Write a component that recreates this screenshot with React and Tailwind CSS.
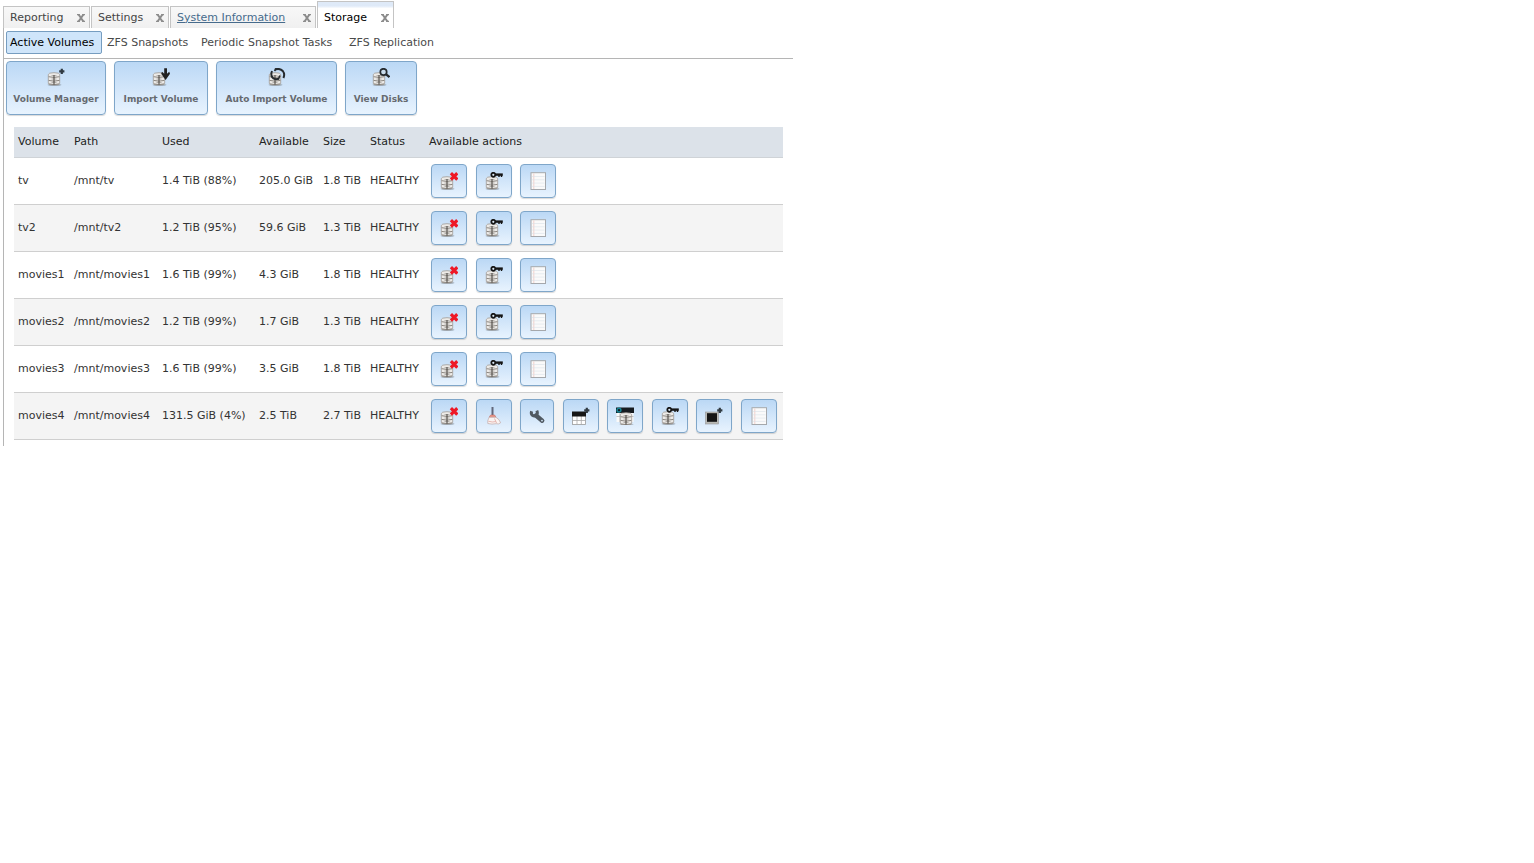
import React, { useState } from "react";

const tabs = [
  { id: "reporting", label: "Reporting", style: "w-[87px]" },
  { id: "settings", label: "Settings", style: "w-[78px]" },
  { id: "sysinfo", label: "System Information", style: "w-[146px]", link: true },
];

const subTabs = [
  { label: "Active Volumes", style: "w-[96px]" },
  { label: "ZFS Snapshots", style: "w-[89px]" },
  { label: "Periodic Snapshot Tasks", style: "w-[143px]" },
  { label: "ZFS Replication", style: "w-[92px]" },
];

const basicActions = ["detach", "key", "status"];
const fullActions = [
  "detach",
  "scrub",
  "options",
  "dataset",
  "zvol",
  "key",
  "snapshot",
  "status",
];

const volumes = [
  { name: "tv", used: "1.4 TiB (88%)", available: "205.0 GiB", size: "1.8 TiB", actions: basicActions },
  { name: "tv2", used: "1.2 TiB (95%)", available: "59.6 GiB", size: "1.3 TiB", actions: basicActions },
  { name: "movies1", used: "1.6 TiB (99%)", available: "4.3 GiB", size: "1.8 TiB", actions: basicActions },
  { name: "movies2", used: "1.2 TiB (99%)", available: "1.7 GiB", size: "1.3 TiB", actions: basicActions },
  { name: "movies3", used: "1.6 TiB (99%)", available: "3.5 GiB", size: "1.8 TiB", actions: basicActions },
  { name: "movies4", used: "131.5 GiB (4%)", available: "2.5 TiB", size: "2.7 TiB", actions: fullActions },
];

const actionLabels = {
  detach: "Detach Volume",
  scrub: "Scrub Volume",
  options: "Edit Options",
  dataset: "Create Dataset",
  zvol: "Create Zvol",
  key: "Change Permissions",
  snapshot: "Create Snapshot",
  status: "Volume Status",
};

// Stack of three drives, shared by most of the icons
function Disks() {
  return (
    <g>
      <ellipse cx="7.5" cy="16.8" rx="7" ry="1.2" fill="#7f8a94" opacity="0.6" />
      <path
        d="M1.3 6.5q0-1.8 5.7-1.8t5.7 1.8v9q0 1.5-5.7 1.5t-5.7-1.5z"
        fill="#eceae7"
        stroke="#a09b96"
        strokeWidth="0.8"
      />
      <path
        d="M1.6 8.7q5.4 1.5 10.8 0M1.6 12.4q5.4 1.5 10.8 0M1.8 15.9q5.2 1.4 10.4 0"
        fill="none"
        stroke="#8b8680"
        strokeWidth="1"
      />
      <path d="M4.5 7.6h5M4.5 11h5M4.5 14.5h5" stroke="#9d9893" strokeWidth="0.7" />
      <path d="M7 7v9.5" stroke="#57524e" strokeWidth="1.2" />
    </g>
  );
}

function Plus() {
  return <path d="M14.8 0.7v5.2M12.2 3.3h5.2" stroke="#303a42" strokeWidth="2.2" />;
}

function Grid() {
  return (
    <g>
      <rect x="0.5" y="6" width="13" height="11.5" fill="#fff" stroke="#999" strokeWidth="0.8" />
      <path d="M5 9v8.5M9.3 9v8.5M0.5 13.5h13" stroke="#aaa" strokeWidth="0.8" />
      <rect x="0" y="4.5" width="14" height="5" fill="#161616" />
    </g>
  );
}

function Icon({ name }) {
  return (
    <svg viewBox="0 0 18 18" className="inline-block h-[18px] w-[18px]" aria-hidden="true">
      {["manager", "import", "auto", "view", "detach", "key"].includes(name) && <Disks />}
      {name === "manager" && <Plus />}
      {name === "import" && (
        <path d="M12.2 0.3h2.8v5.4l2.2-2 .8 2-4.4 6.3-4.4-6.3.8-2 2.2 2z" fill="#222" />
      )}
      {name === "auto" && (
        <g fill="none" stroke="#252a2e" strokeWidth="2">
          <path d="M4 3q-1.8 4.5 1 7q2.5 2 5.3.6" />
          <path d="M6.8 1.6q5-1.8 8 1.4q2.4 3 .6 7" />
          <path d="M11.8 7.5l-1.5 4.3M8.5 0l-2 3" strokeWidth="1.6" />
        </g>
      )}
      {name === "view" && (
        <g fill="none" stroke="#252a2e">
          <circle cx="11.5" cy="4" r="3.2" fill="#c9dcec" strokeWidth="1.7" />
          <path d="M13.8 6.2l3.7 3" strokeWidth="2.3" />
        </g>
      )}
      {name === "detach" && (
        <path d="M10.9 1.2l6.4 6.4M17.3 1.2l-6.4 6.4" stroke="#ee1826" strokeWidth="3.2" />
      )}
      {name === "key" && (
        <g stroke="#151515">
          <circle cx="8.3" cy="2.8" r="2" fill="#dbe8f4" strokeWidth="1.8" />
          <path d="M10.3 2.6h7.5" strokeWidth="2.4" />
          <path d="M14 3v2M16.5 3v2" strokeWidth="1.4" />
        </g>
      )}
      {name === "status" && (
        <g>
          <rect x="2" y="0.7" width="14.5" height="16.8" fill="#fafafa" stroke="#a5a8ac" strokeWidth="1" />
          <path d="M4.8 1.5v15.5" stroke="#f0c8c0" strokeWidth="0.8" />
          <path
            d="M3 4.5h12.5M3 7.8h12.5M3 11.1h12.5M3 14.4h12.5"
            stroke="#d9e0e8"
            strokeWidth="0.6"
          />
        </g>
      )}
      {name === "scrub" && (
        <g>
          <path d="M7.5 0v8" stroke="#61677b" strokeWidth="2" />
          <path d="M5.6 8h4l1.4 2.3H4.2z" fill="#ef9b8d" stroke="#bd6a60" strokeWidth="0.6" />
          <path
            d="M4.2 10.3H11q3.6 2 4.6 5.5-2 1.8-4.5.9-4 .9-8.3-.2-.6-3.2 1.4-6.2z"
            fill="#f9f4f3"
            stroke="#c0a8a6"
            strokeWidth="0.7"
          />
          <path d="M3.4 14.2q4 1.4 7.2.4M9.5 11.5l2 4.5" fill="none" stroke="#dd9b92" strokeWidth="0.7" />
        </g>
      )}
      {name === "options" && (
        <g fill="none" stroke="#505962">
          <path d="M8 8.5l6.2 5.2" strokeWidth="4.4" strokeLinecap="round" />
          <path d="M3.6 4.3q-.9 2.6.8 4q2 1.4 4 0q1.7-2 .4-4.6" strokeWidth="3" />
          <circle cx="14" cy="13.6" r="0.9" fill="#d3e5f6" stroke="none" />
        </g>
      )}
      {name === "dataset" && (
        <g>
          <Grid />
          <Plus />
        </g>
      )}
      {name === "zvol" && (
        <g>
          <rect x="0.5" y="1" width="17" height="14" fill="#fafafa" />
          <path d="M0.5 9.5h17M4 6v9" stroke="#aaa" strokeWidth="0.7" />
          <rect x="0" y="0.5" width="18" height="5.5" fill="#161b20" />
          <circle cx="3" cy="3.2" r="1.9" fill="none" stroke="#168394" strokeWidth="1.5" />
          <g transform="translate(3 1)">
            <Disks />
          </g>
        </g>
      )}
      {name === "snapshot" && (
        <g>
          <rect x="0.5" y="5" width="13" height="12" fill="#b9b9b4" stroke="#96969a" strokeWidth="0.6" />
          <rect x="2" y="6.2" width="10" height="8.6" fill="#151515" />
          <Plus />
        </g>
      )}
    </svg>
  );
}

function CloseButton({ label }) {
  return (
    <button type="button" aria-label={`Close ${label}`} className="ml-auto h-3 w-2">
      <svg viewBox="0 0 8 8" className="h-2 w-2" aria-hidden="true">
        <path d="M1.4 0.3l5.2 7.4M6.6 0.3l-5.2 7.4" fill="none" stroke="#8c8c8c" strokeWidth="2" />
        <path d="M0 .6h2.8M5.2 .6h2.8M0 7.4h2.8M5.2 7.4h2.8" stroke="#8c8c8c" strokeWidth="1.1" />
      </svg>
    </button>
  );
}

function ToolbarButton({ icon, label, width }) {
  return (
    <button
      type="button"
      className={`${width} flex h-[54px] flex-col items-center rounded-[4px] border border-[#7fa6c9] bg-linear-to-b from-[#bbd8f5] to-[#e8f3fe] pt-[6px] shadow-[0_1px_1px_rgba(0,0,0,0.15)]`}
    >
      <Icon name={icon} />
      <span className="mt-[6px] text-[9px] leading-[14px] font-bold whitespace-nowrap text-[#666a70]">
        {label}
      </span>
    </button>
  );
}

function ActionButton({ action }) {
  const width = action === "options" ? "w-[34px]" : "w-9";
  return (
    <button
      type="button"
      aria-label={actionLabels[action]}
      className={`${width} mr-[3px] ml-[2px] inline-flex h-[34px] items-center justify-center rounded-[4px] border border-[#7fa6c9] bg-linear-to-b from-[#bbd8f5] to-[#e8f3fe] align-middle shadow-[0_1px_1px_rgba(0,0,0,0.15)]`}
    >
      <Icon name={action} />
    </button>
  );
}

function App() {
  const [activeSub, setActiveSub] = useState("Active Volumes");

  return (
    <div className="min-h-screen bg-white font-['DejaVu_Sans',Verdana,sans-serif] text-[11px] leading-[14px] text-[#333]">
      <div className="w-full max-w-[793px] pt-px pl-[3px]">
        <div className="flex h-[27px] items-end gap-px">
          {tabs.map((tab) => (
            <div
              key={tab.id}
              className={`${tab.style} flex h-[22px] items-center border border-b-0 border-[#c4c4c4] bg-linear-to-b from-[#f8f8f8] to-[#f0f0f0] pr-[4px] pl-[6px] whitespace-nowrap`}
            >
              {tab.link ? (
                <a href="#sysinfo" className="text-[#466b8c] underline">
                  {tab.label}
                </a>
              ) : (
                <button type="button" className="text-[#444]">
                  {tab.label}
                </button>
              )}
              <CloseButton label={tab.label} />
            </div>
          ))}
          <div className="flex h-[27px] w-[77px] items-center border border-b-0 border-[#c4c4c4] bg-linear-to-b from-[#dfeaf8] from-15% to-white to-25% pt-[6px] pr-[4px] pl-[6px]">
            <button type="button" className="text-black">
              Storage
            </button>
            <CloseButton label="Storage" />
          </div>
        </div>

        <div className="border-l border-[#b5b5b5] pb-[6px]">
          <div className="flex h-[31px] items-center gap-[5px] border-b border-[#b5b5b5] pb-px pl-[2px] whitespace-nowrap">
            {subTabs.map((tab) => (
              <button
                key={tab.label}
                type="button"
                onClick={() => setActiveSub(tab.label)}
                className={`${tab.style} h-[23px] text-left ${
                  activeSub === tab.label
                    ? "rounded-[2px] border border-[#769dc0] bg-[#cfe5fa] px-[3px] text-black"
                    : "text-[#4a4a4a]"
                }`}
              >
                {tab.label}
              </button>
            ))}
          </div>

          <div className="flex gap-2 pt-[2px] pl-[2px]">
            <ToolbarButton icon="manager" label="Volume Manager" width="w-[100px]" />
            <ToolbarButton icon="import" label="Import Volume" width="w-[94px]" />
            <ToolbarButton icon="auto" label="Auto Import Volume" width="w-[121px]" />
            <ToolbarButton icon="view" label="View Disks" width="w-[72px]" />
          </div>

          <div className="pt-3 pr-[10px] pl-[10px]">
            <table className="w-full table-fixed border-collapse text-left whitespace-nowrap">
              <thead>
                <tr className="h-[30px] border-b border-[#cfd3d7] bg-[#dce2e9] text-[#222]">
                  <th className="w-[56px] px-1 font-normal">Volume</th>
                  <th className="w-[88px] px-1 font-normal">Path</th>
                  <th className="w-[97px] px-1 font-normal">Used</th>
                  <th className="w-[64px] px-1 font-normal">Available</th>
                  <th className="w-[47px] px-1 font-normal">Size</th>
                  <th className="w-[59px] px-1 font-normal">Status</th>
                  <th className="px-1 font-normal">Available actions</th>
                </tr>
              </thead>
              <tbody>
                {volumes.map((volume) => (
                  <tr key={volume.name} className="h-[47px] border-b border-[#cfcfcf] even:bg-[#f4f4f4]">
                    <td className="px-1">{volume.name}</td>
                    <td className="px-1">/mnt/{volume.name}</td>
                    <td className="px-1">{volume.used}</td>
                    <td className="px-1">{volume.available}</td>
                    <td className="px-1">{volume.size}</td>
                    <td className="px-1">HEALTHY</td>
                    <td className="pl-1">
                      {volume.actions.map((action) => (
                        <React.Fragment key={action}>
                          <ActionButton action={action} />{" "}
                        </React.Fragment>
                      ))}
                    </td>
                  </tr>
                ))}
              </tbody>
            </table>
          </div>
        </div>
      </div>
    </div>
  );
}

export default App;
